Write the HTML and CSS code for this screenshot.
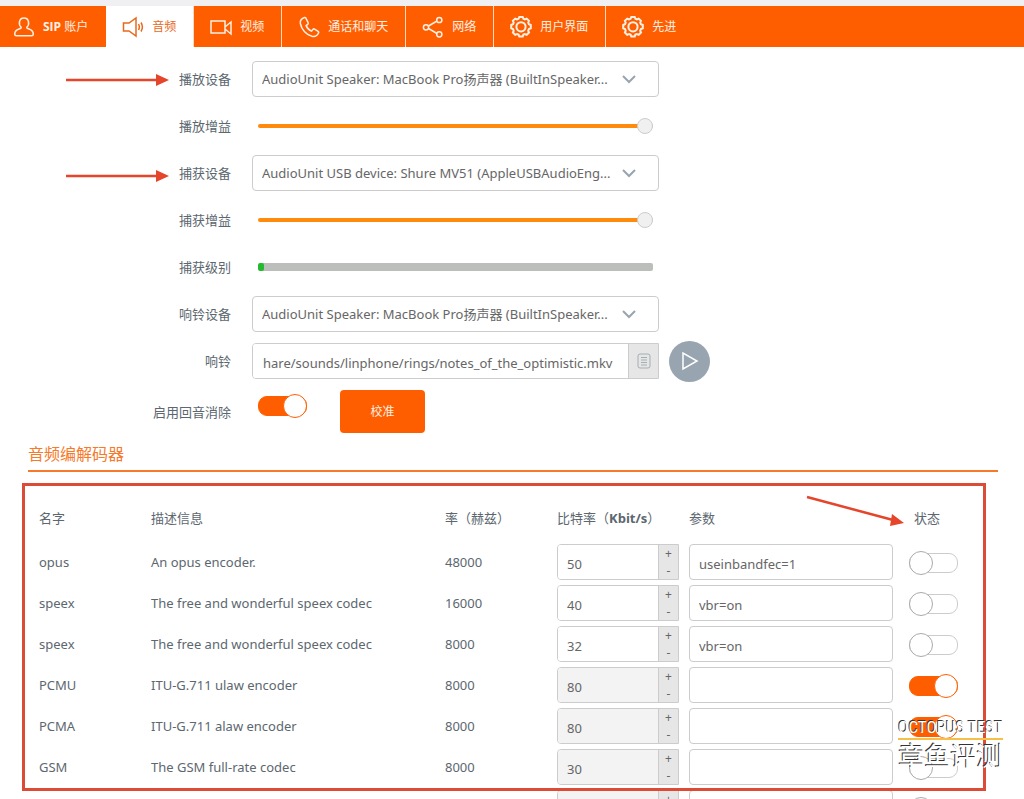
FILE: index.html
```html
<!DOCTYPE html>
<html lang="zh-CN">
<head>
<meta charset="utf-8">
<meta name="viewport" content="width=device-width, initial-scale=1">
<title>音频</title>
<link rel="stylesheet" href="styles.css">
</head>
<body>
<svg class="defs" aria-hidden="true">
  <symbol id="gear" viewBox="0 0 22 22"><path d="M9.300 1h3.400l.7 1.800 1.500.6 1.800-.8 2.200 2.200-.7 1.800.7 1.600 1.900.8v3.300l-1.900.8-.7 1.600.8 1.800-2.300 2.300-1.800-.8-1.500.6-.7 1.900H9.300l-.8-1.900-1.500-.6-1.800.8-2.300-2.300.8-1.800-.7-1.600-1.800-.8V9l1.800-.8.7-1.600-.8-1.800 2.300-2.200 1.800.8 1.500-.6z"/><circle cx="11" cy="10.800" r="4.600"/></symbol>
</svg>
<nav class="tabs">
  <button class="tab"><svg class="icon" viewBox="0 0 22 22"><path d="M8 11C5.500 9 5.500 2 11 2s5.500 7 3 9c-.8 1 .3 1.500 2 2 3.200 1 4.300 3 4.300 5.300 0 1-.7 1.500-1.800 1.500h-15c-1.100 0-1.800-.5-1.800-1.500C1.700 16 2.800 14 6 13c1.700-.5 2.800-1 2-2z"/></svg><span><b>SIP</b> 账户</span></button>
  <button class="tab tab-active"><svg class="icon" viewBox="0 0 22 22"><path d="M1.500 7h5.500l7-5v18l-7-5H1.500zM16.500 8q1.700 3 0 6M19 6.500q2.800 4.500 0 9"/></svg><span>音频</span></button>
  <button class="tab"><svg class="icon" viewBox="0 0 22 22"><path d="M1 5h14v12H1zM15 11l6-5v12l-6-5"/></svg><span>视频</span></button>
  <button class="tab"><svg class="icon" viewBox="0 0 22 22"><path d="M6.500 1.500c-3 1-4.700 3.500-4 6.500 1 5.500 6 11 11.500 12.300 3 .6 5.500-.8 6.600-3.500.3-.7 0-1-.5-1.400l-3.500-2.300c-.7-.4-1.200-.3-1.700.3l-1.300 1.700c-2.500-1-4.500-3-5.500-5.500l1.600-1.300c.6-.5.8-1 .4-1.700L7.800 2c-.3-.5-.7-.7-1.300-.5z"/></svg><span>通话和聊天</span></button>
  <button class="tab"><svg class="icon" viewBox="0 0 22 22"><path d="m6.500 10 8.500-5M6.500 12.500l8.500 5"/><circle cx="4" cy="11.300" r="2.600"/><circle cx="17.300" cy="4" r="2.600"/><circle cx="17.300" cy="18.300" r="2.600"/></svg><span>网络</span></button>
  <button class="tab"><svg class="icon icon-gear"><use href="#gear"/></svg><span>用户界面</span></button>
  <button class="tab"><svg class="icon icon-gear"><use href="#gear"/></svg><span>先进</span></button>
</nav>
<main>
  <form class="settings">
    <label for="play-dev">播放设备</label>
    <div class="picker"><select id="play-dev"><option>AudioUnit Speaker: MacBook Pro扬声器 (BuiltInSpeaker...</option></select><svg class="chevron" viewBox="0 0 14 10"><path d="m1 2 6 6 6-6"/></svg></div>
    <label for="play-gain">播放增益</label>
    <input id="play-gain" class="slider" type="range" value="100">
    <label for="cap-dev">捕获设备</label>
    <div class="picker"><select id="cap-dev"><option>AudioUnit USB device: Shure MV51 (AppleUSBAudioEng...</option></select><svg class="chevron" viewBox="0 0 14 10"><path d="m1 2 6 6 6-6"/></svg></div>
    <label for="cap-gain">捕获增益</label>
    <input id="cap-gain" class="slider" type="range" value="100">
    <span class="label" id="level-label">捕获级别</span>
    <div class="level" role="meter" aria-labelledby="level-label" aria-valuenow="2"><div class="level-fill"></div></div>
    <label for="ring-dev">响铃设备</label>
    <div class="picker"><select id="ring-dev"><option>AudioUnit Speaker: MacBook Pro扬声器 (BuiltInSpeaker...</option></select><svg class="chevron" viewBox="0 0 14 10"><path d="m1 2 6 6 6-6"/></svg></div>
    <label for="ring">响铃</label>
    <div class="ring">
      <div class="file"><input id="ring" type="text" value="hare/sounds/linphone/rings/notes_of_the_optimistic.mkv"><button type="button" aria-label="选择文件"><svg viewBox="0 0 14 16"><rect x="1" y="1" width="12" height="14" rx="2"/><path d="M4 4.500h6M4 7h6M4 9.500h6M4 12h6"/></svg></button></div>
      <button type="button" class="play" aria-label="播放"><svg viewBox="0 0 18 20"><path d="M2 2v16l14-8z"/></svg></button>
    </div>
    <label for="echo">启用回音消除</label>
    <div class="echo"><input id="echo" class="toggle" type="checkbox" checked><button type="button" class="calibrate">校准</button></div>
  </form>
  <section class="codecs">
    <h2>音频编解码器</h2>
    <table>
      <colgroup><col class="c-name"><col><col class="c-rate"><col class="c-bit"><col class="c-param"><col class="c-state"></colgroup>
      <thead><tr><th>名字</th><th>描述信息</th><th>率（赫兹）</th><th>比特率（<b>Kbit/s</b>）</th><th>参数</th><th class="state-head">状态</th></tr></thead>
      <tbody>
        <tr><td>opus</td><td>An opus encoder.</td><td>48000</td><td><div class="spin"><input aria-label="比特率" value="50"><div class="steps"><button>+</button><button>-</button></div></div></td><td><input class="param" aria-label="参数" value="useinbandfec=1"></td><td><input class="toggle" type="checkbox" aria-label="状态"></td></tr>
        <tr><td>speex</td><td>The free and wonderful speex codec</td><td>16000</td><td><div class="spin"><input aria-label="比特率" value="40"><div class="steps"><button>+</button><button>-</button></div></div></td><td><input class="param" aria-label="参数" value="vbr=on"></td><td><input class="toggle" type="checkbox" aria-label="状态"></td></tr>
        <tr><td>speex</td><td>The free and wonderful speex codec</td><td>8000</td><td><div class="spin"><input aria-label="比特率" value="32"><div class="steps"><button>+</button><button>-</button></div></div></td><td><input class="param" aria-label="参数" value="vbr=on"></td><td><input class="toggle" type="checkbox" aria-label="状态"></td></tr>
        <tr><td>PCMU</td><td>ITU-G.711 ulaw encoder</td><td>8000</td><td><div class="spin"><input aria-label="比特率" value="80" disabled><div class="steps"><button>+</button><button>-</button></div></div></td><td><input class="param" aria-label="参数"></td><td><input class="toggle" type="checkbox" aria-label="状态" checked></td></tr>
        <tr><td>PCMA</td><td>ITU-G.711 alaw encoder</td><td>8000</td><td><div class="spin"><input aria-label="比特率" value="80" disabled><div class="steps"><button>+</button><button>-</button></div></div></td><td><input class="param" aria-label="参数"></td><td><input class="toggle" type="checkbox" aria-label="状态" checked></td></tr>
        <tr><td>GSM</td><td>The GSM full-rate codec</td><td>8000</td><td><div class="spin"><input aria-label="比特率" value="30" disabled><div class="steps"><button>+</button><button>-</button></div></div></td><td><input class="param" aria-label="参数"></td><td><input class="toggle" type="checkbox" aria-label="状态"></td></tr>
        <tr><td></td><td></td><td></td><td><div class="spin"><input aria-label="比特率" disabled><div class="steps"><button>+</button><button>-</button></div></div></td><td><input class="param" aria-label="参数"></td><td><input class="toggle" type="checkbox" aria-label="状态"></td></tr>
      </tbody>
    </table>
    <div class="frame"></div>
    <svg class="note note-state" viewBox="0 0 100 34"><path d="M2 3 88 26"/><path class="head" d="m87 20 12 9-14 3z"/></svg>
    <div class="mark"><span class="mark-en">OCTOPUS TEST</span><span class="mark-zh">章鱼评测</span></div>
  </section>
  <svg class="note note-play" viewBox="0 0 104 14"><path d="M1 7h92"/><path class="head" d="m91 1 13 6-13 6z"/></svg>
  <svg class="note note-capture" viewBox="0 0 104 14"><path d="M1 7h92"/><path class="head" d="m91 1 13 6-13 6z"/></svg>
</main>
</body>
</html>
```
FILE: styles.css
```css
* { box-sizing: border-box; }
body {
  margin: 0;
  height: 100vh;
  overflow: hidden;
  border-top: 6px solid #f0f0f2;
  background: #fff;
  color: #5c676f;
  font: 13px/18px "Noto Sans", "Noto Sans CJK SC", sans-serif;
}
b { font-family: "Open Sans", "Noto Sans", sans-serif; font-weight: 700; }
button, input, select { font: inherit; color: inherit; margin: 0; }
button { padding: 0; border: 0; cursor: pointer; }
svg { fill: none; stroke: currentColor; }
.defs { position: absolute; width: 0; height: 0; }

.tabs { display: flex; height: 41px; background: #ff5e00; }
.tab {
  display: flex;
  align-items: center;
  gap: 8px;
  padding: 0 17px 0 16px;
  border-right: 1px solid #ffd9c0;
  background: #ff5e00;
  color: #fff0e4;
  font-size: 12px;
  white-space: nowrap;
}
.tab:first-child { padding: 0 18px 0 13px; border-right: 0; }
.tab:last-child { border-right: 0; }
.tab-active { background: #fff; color: #e8691c; }
.icon { width: 22px; height: 22px; stroke-width: 1.5; }
.icon-gear { stroke-width: 2; }

main { position: relative; padding-top: 14px; }
.settings {
  display: grid;
  grid-template-columns: 231px minmax(0, 407px);
  column-gap: 21px;
  row-gap: 11px;
  grid-auto-rows: minmax(36px, auto);
  align-items: center;
}
.settings label, .label { text-align: right; }
.picker { position: relative; }
.picker select {
  display: block;
  width: 100%;
  height: 36px;
  padding: 0 40px 0 9px;
  border: 1px solid #ccc;
  border-radius: 4px;
  background: #fff;
  color: #666;
  appearance: none;
}
.chevron {
  position: absolute;
  top: 13px;
  right: 23px;
  width: 14px;
  height: 10px;
  color: #98a5b0;
  stroke-width: 2;
  pointer-events: none;
}
.slider { appearance: none; height: 18px; margin: 0 6px; background: none; }
.slider::-webkit-slider-runnable-track { height: 4px; border-radius: 2px; background: #ff8a0c; }
.slider::-webkit-slider-thumb {
  appearance: none;
  width: 16px;
  height: 16px;
  margin-top: -6px;
  border: 1px solid #ccc;
  border-radius: 50%;
  background: #f0f0f0;
}
.level { height: 8px; margin: 0 6px; border-radius: 2px; background: #bcbebc; overflow: hidden; }
.level-fill { width: 6px; height: 8px; border-radius: 2px; background: #22bb2c; }

.ring { display: grid; grid-template: 36px / 100% 41px; gap: 10px; align-items: center; }
.file {
  display: flex;
  height: 36px;
  border: 1px solid #ccc;
  border-radius: 4px 0 0 4px;
  overflow: hidden;
}
.file input { flex: 1; min-width: 0; padding: 4px 8px 0 10px; border: 0; background: #fff; color: #666; }
.file button { display: grid; place-items: center; width: 30px; border-left: 1px solid #ccc; background: #e6e6e6; color: #a4aeb4; }
.file svg { width: 14px; height: 16px; }
.play {
  display: grid;
  place-items: center;
  width: 41px;
  height: 41px;
  border-radius: 50%;
  background: #98a5b0;
  color: #fff;
}
.play svg { width: 18px; height: 20px; stroke-width: 1.5; }

.echo { display: flex; align-items: flex-start; gap: 33px; padding-left: 6px; }
.echo .toggle { margin-top: 4px; }
.calibrate { width: 85px; height: 43px; border-radius: 4px; background: #ff5e00; color: #fff0e4; font-size: 12px; }

.toggle { appearance: none; display: grid; align-items: center; width: 49px; height: 22px; }
.toggle::before {
  content: "";
  grid-area: 1 / 1;
  height: 18px;
  border: 1px solid #ccc;
  border-radius: 9px;
  background: #fff;
}
.toggle::after {
  content: "";
  grid-area: 1 / 1;
  width: 22px;
  height: 22px;
  border: 1px solid #aaa;
  border-radius: 50%;
  background: #fff;
}
.toggle:checked::before { border-color: #ff5e00; background: #ff5e00; }
.toggle:checked::after { justify-self: end; border-color: #ff5e00; }

.codecs { position: relative; padding: 9px 26px 0 28px; }
h2 {
  margin: 0;
  padding-bottom: 4px;
  border-bottom: 2px solid #f57a2a;
  color: #f57a2a;
  font-size: 16px;
  font-weight: 400;
  line-height: 24px;
}
table { width: 100%; padding: 0 13px 0 11px; margin-top: 22px; table-layout: fixed; border-spacing: 0; }
th { height: 50px; padding: 0; text-align: left; vertical-align: top; font-weight: 400; line-height: 48px; white-space: nowrap; }
td { height: 41px; padding: 0 0 5px; line-height: 18px; }
.c-name { width: 112px; }
.c-rate { width: 112px; }
.c-bit { width: 132px; }
.c-param { width: 220px; }
.c-state { width: 76px; }
.state-head { padding-left: 5px; }
.spin { display: flex; width: 122px; height: 36px; border: 1px solid #ccc; border-radius: 4px 0 0 4px; overflow: hidden; }
.spin input { flex: 1; min-width: 0; padding: 4px 9px 0; border: 0; background: #fff; color: #666; }
.spin input:disabled { background: #f3f3f3; }
.steps { display: grid; grid-template-rows: 1fr 1fr; width: 20px; border-left: 1px solid #ccc; background: #e6e6e6; }
.steps button { background: none; font-size: 12px; line-height: 16px; color: #666; }
.param {
  display: block;
  width: 204px;
  height: 36px;
  padding: 4px 9px 0;
  border: 1px solid #ccc;
  border-radius: 4px;
  background: #fff;
  color: #666;
}

/* Annotations drawn over the window */
.frame {
  position: absolute;
  top: 50px;
  left: 22px;
  right: 38px;
  height: 308px;
  border: 3px solid #dc4a38;
  pointer-events: none;
}
.note { position: absolute; color: #e5452a; stroke-width: 2.500; pointer-events: none; }
.note .head { fill: currentColor; stroke: none; }
.note-play { top: 26px; left: 65px; width: 104px; height: 14px; }
.note-capture { top: 122px; left: 65px; width: 104px; height: 14px; }
.note-state { top: 61px; right: 119px; width: 100px; height: 34px; }
.mark {
  position: absolute;
  top: 283px;
  right: 21px;
  display: grid;
  justify-items: center;
  color: #fff;
  text-shadow: -1px -1px 0 #333;
  white-space: nowrap;
  pointer-events: none;
}
.mark-en { border-bottom: 2px solid #f5c045; font: 17px/22px "Roboto Condensed", "Liberation Sans Narrow", Roboto, "Liberation Sans", sans-serif; }
.mark-zh { font: 26px/30px "Noto Sans CJK SC", sans-serif; }
```
